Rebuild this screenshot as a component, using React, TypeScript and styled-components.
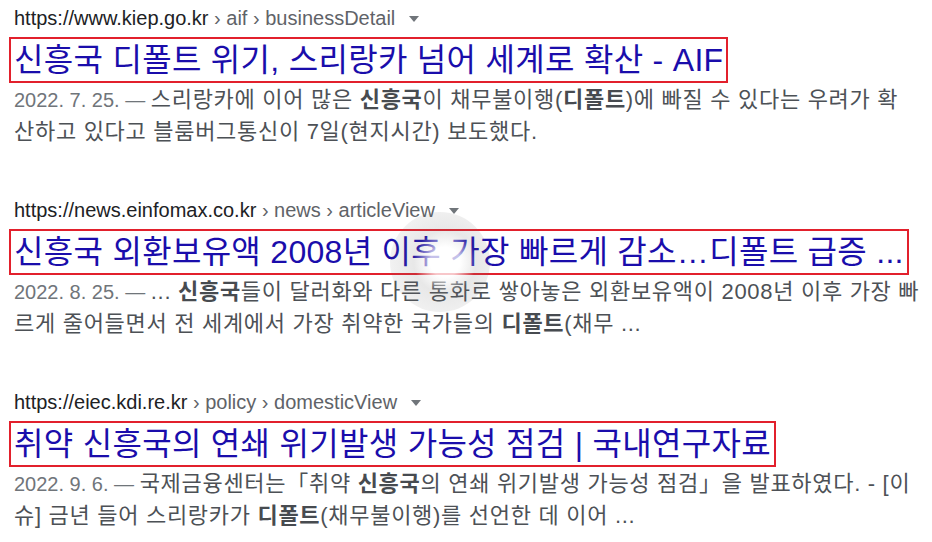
import { FC, Fragment } from 'react';
import styled, { createGlobalStyle } from 'styled-components';

const GlobalStyle = createGlobalStyle`
  body {
    margin: 0;
    background: #fff;
    font-family: "Liberation Sans", Arial, "Noto Sans CJK KR", sans-serif;
  }
`;

const Page = styled.main`
  position: relative;
  width: 932px;
  height: 542px;
  overflow: hidden;
  padding: 4px 0 0 14px;
  box-sizing: border-box;
  display: flex;
  flex-direction: column;
  gap: 48px;
`;

const Result = styled.section`
  display: flex;
  flex-direction: column;
  align-items: flex-start;
`;

const UrlRow = styled.div`
  height: 28px;
  line-height: 28px;
  font-size: 20px;
  color: #202124;
  white-space: nowrap;
`;

const Crumbs = styled.span`
  color: #5f6368;
`;

const Caret = styled.span`
  display: inline-block;
  vertical-align: middle;
  margin: -2px 0 0 14px;
  width: 0;
  height: 0;
  border-left: 5px solid transparent;
  border-right: 5px solid transparent;
  border-top: 6px solid #70757a;
`;

const Title = styled.a`
  margin: 5px 0 0 -5px;
  padding: 0 3px;
  border: 2px solid #e2202c;
  font-size: 32px;
  line-height: 42px;
  letter-spacing: 0.3px;
  color: #1a0dab;
  text-decoration: none;
  white-space: nowrap;
`;

const Snippet = styled.p`
  margin: 1px 0 0;
  font-size: 22px;
  line-height: 32px;
  letter-spacing: 0.7px;
  color: #4d5156;
  white-space: nowrap;
`;

const Date = styled.span`
  font-size: 20px;
  color: #70757a;
  letter-spacing: 0;
`;

const Em = styled.b`
  font-weight: 600;
  color: #474b50;
`;

const Watermark = styled.div`
  position: absolute;
  left: 390px;
  top: 212px;
  width: 100px;
  height: 100px;
  border-radius: 50%;
  background: radial-gradient(circle at 55% 50%, rgba(255,255,255,0.75) 0 20%, rgba(110,110,110,0.16) 42%, rgba(110,110,110,0.10) 70%, rgba(255,255,255,0) 100%);
  pointer-events: none;
`;

type Part = string | { b: string };

type Item = {
  domain: string;
  crumbs: string;
  date: string;
  title: string;
  lines: Part[][];
};

const items: Item[] = [
  {
    domain: 'https://www.kiep.go.kr',
    crumbs: ' › aif › businessDetail',
    date: '2022. 7. 25.',
    title: '신흥국 디폴트 위기, 스리랑카 넘어 세계로 확산 - AIF',
    lines: [
      ['스리랑카에 이어 많은 ', { b: '신흥국' }, '이 채무불이행(', { b: '디폴트' }, ')에 빠질 수 있다는 우려가 확'],
      ['산하고 있다고 블룸버그통신이 7일(현지시간) 보도했다.'],
    ],
  },
  {
    domain: 'https://news.einfomax.co.kr',
    crumbs: ' › news › articleView',
    date: '2022. 8. 25.',
    title: '신흥국 외환보유액 2008년 이후 가장 빠르게 감소…디폴트 급증 ...',
    lines: [
      ['... ', { b: '신흥국' }, '들이 달러화와 다른 통화로 쌓아놓은 외환보유액이 2008년 이후 가장 빠'],
      ['르게 줄어들면서 전 세계에서 가장 취약한 국가들의 ', { b: '디폴트' }, '(채무 ...'],
    ],
  },
  {
    domain: 'https://eiec.kdi.re.kr',
    crumbs: ' › policy › domesticView',
    date: '2022. 9. 6.',
    title: '취약 신흥국의 연쇄 위기발생 가능성 점검 | 국내연구자료',
    lines: [
      ['국제금융센터는「취약 ', { b: '신흥국' }, '의 연쇄 위기발생 가능성 점검」을 발표하였다. - [이'],
      ['슈] 금년 들어 스리랑카가 ', { b: '디폴트' }, '(채무불이행)를 선언한 데 이어 ...'],
    ],
  },
];

const App: FC = () => (
  <Fragment>
    <GlobalStyle />
    <Page>
      {items.map((it) => (
        <Result key={it.domain}>
          <UrlRow>
            {it.domain}
            <Crumbs>{it.crumbs}</Crumbs>
            <Caret />
          </UrlRow>
          <Title href="#">{it.title}</Title>
          <Snippet>
            <Date>{it.date} — </Date>
            {it.lines.map((line, li) => (
              <Fragment key={li}>
                {li > 0 && <br />}
                {line.map((part, pi) =>
                  typeof part === 'string' ? <Fragment key={pi}>{part}</Fragment> : <Em key={pi}>{part.b}</Em>
                )}
              </Fragment>
            ))}
          </Snippet>
        </Result>
      ))}
      <Watermark />
    </Page>
  </Fragment>
);

export default App;
